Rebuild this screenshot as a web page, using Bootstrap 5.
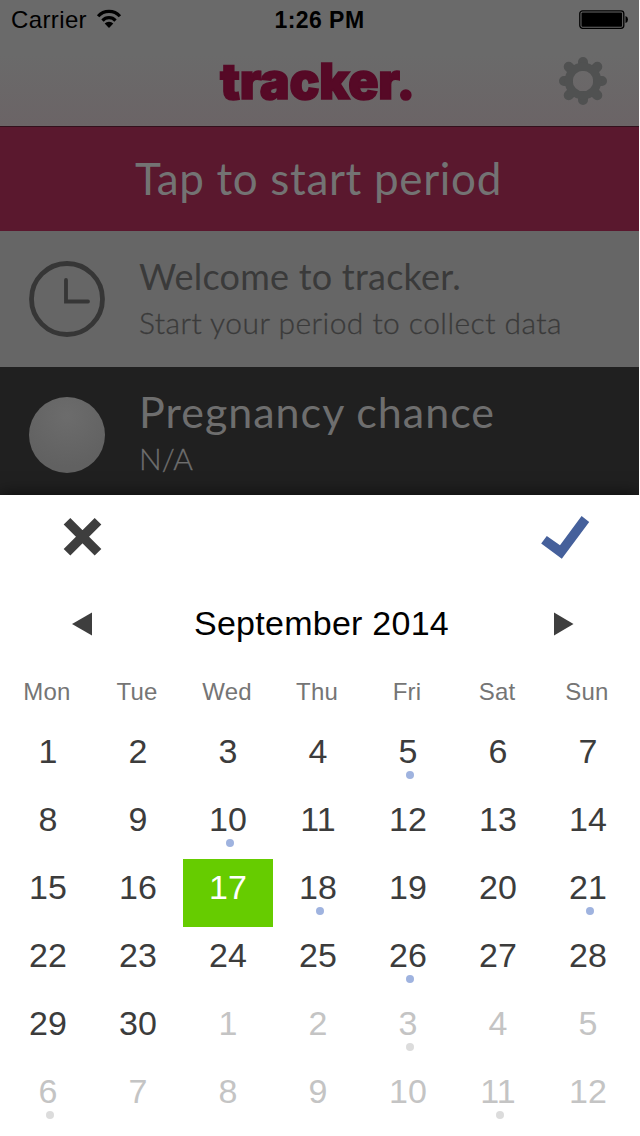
<!DOCTYPE html>
<html lang="en">
<head>
<meta charset="utf-8">
<meta name="viewport" content="width=device-width, initial-scale=1">
<title>tracker.</title>
<link href="https://cdn.jsdelivr.net/npm/bootstrap@5.3.0/dist/css/bootstrap.min.css" rel="stylesheet">
<style>
body{font-family:"Liberation Sans",Arial,sans-serif;background:#fff;overflow:hidden}
.phone{width:639px;height:1136px;overflow:hidden}
.top-area{height:127px;background:linear-gradient(#6a6a6a 0,#6a6a6a 55px,#6b6466 126px);border-bottom:1px solid #32101c}
.status{height:40px;padding:0 10px 0 11px;font-size:24px;line-height:40px;color:#000}
.status .wifi{margin-top:-2px}
.status .time{font-size:23px;font-weight:700}
.brand-row{height:86px}
.brand-name{font:900 50px/60px Inter,sans-serif;color:#560926;padding:11px 0 0 220px;-webkit-text-stroke:1.6px #560926}
.gear{right:31px;top:16px}
.start-btn{height:104px;padding-left:135px;background:#5a182e;color:#737373;font:400 44px/103px Lato,sans-serif}
.info{padding-left:29px;font-family:Lato,sans-serif}
.info-welcome{height:136px;background:#666;color:#3a3a3a}
.info-chance{height:128px;padding-top:30px;background:#202020;color:#6e6e6e}
.info-text{padding-left:34px;white-space:nowrap}
.info-welcome .info-text{margin-top:-1px}
.info-chance .info-text{margin-top:-10px}
.l1{font-size:36px;line-height:46px}
.l2{font-size:30px;line-height:46px;font-weight:300;-webkit-text-stroke:.3px #3a3a3a}
.l3{font-size:43px;line-height:50px}
.l4{font-size:30px;line-height:42px;font-weight:300;-webkit-text-stroke:.3px #6e6e6e}
.orb{width:76px;height:76px;background:radial-gradient(circle at 50% 25%,#6c6c6c,#616161 75%)}
.sheet{height:641px;background:#fff;box-shadow:0 0 16px 0 rgba(0,0,0,.7)}
.tools{height:86px;padding:21px 49px 0 62px}
.monthbar{height:97px;padding:22px 65px 0 72px}
.monthbar svg{margin-top:9px}
.month{font-size:34px;line-height:40px;color:#000;margin-left:-3px}
.grid7{display:grid;grid-template-columns:repeat(7,90px);padding-left:3px}
.weekdays{height:45px;padding-left:2px}
.weekday{font-size:24px;line-height:28px;color:#757575;letter-spacing:.2px}
.day{height:68px;font-size:34px;line-height:40px;padding-top:8px;color:#3c3c3c}
.day.out{color:#c4c4c4}
.day.today{background:#6c0;color:#fff}
.dot{width:8px;height:8px;left:43px;top:48px;background:#9fb3df}
.out .dot{background:#dcdcdc}
</style>
</head>
<body>
<main class="phone d-flex flex-column">
  <header class="top-area flex-shrink-0">
    <div class="status d-flex align-items-center position-relative">
      <span id="carrier">Carrier</span>
      <svg class="wifi ms-2" width="28" height="20" viewBox="0 0 28 20"><g fill="none" stroke="#000" stroke-width="3.2"><path d="M3.1 7.3a14.5 14.5 0 0 1 21.8 0"/><path d="M7.5 11.6a8.7 8.7 0 0 1 13 0"/></g><path d="M9.7 14.6a5.7 5.7 0 0 1 8.6 0L14 19z"/></svg>
      <span class="time position-absolute start-0 end-0 text-center"><span id="time">1:26 PM</span></span>
      <svg class="ms-auto" width="50" height="20" viewBox="0 0 50 20"><rect x=".8" y=".8" width="44" height="17.6" rx="2.8" fill="none" stroke="#000" stroke-width="1.3"/><rect x="2.5" y="2.5" width="40.6" height="14.2" rx="1"/><path d="M46.5 6v7q2.5-.8 2.5-3.5T46.5 6z"/></svg>
    </div>
    <div class="brand-row position-relative">
      <div class="brand-name"><span id="brand">tracker.</span></div>
      <svg class="gear position-absolute" width="50" height="50" viewBox="-25 -25 50 50"><g stroke="#505151" stroke-width="10" stroke-linecap="round"><path d="M0-19V-15M0 15v4M-19 0H-15M15 0h4M-14.3-14.3l3 3M11.3 11.3l3 3M14.3-14.3l-3 3M-11.3 11.3l-3 3"/></g><circle r="14.3" fill="none" stroke="#505151" stroke-width="8"/></svg>
    </div>
  </header>
  <div class="start-btn flex-shrink-0"><span id="tap">Tap to start period</span></div>
  <section class="info info-welcome d-flex align-items-center flex-shrink-0">
    <svg width="76" height="76" viewBox="0 0 76 76" fill="none" stroke="#363636"><circle cx="38" cy="38" r="35.5" stroke-width="4.8"/><path d="M37 19v21.5h22" stroke-width="3.8" stroke-linecap="round"/></svg>
    <div class="info-text"><div class="l1"><span id="welcome">Welcome to tracker.</span></div><div class="l2"><span id="collect">Start your period to collect data</span></div></div>
  </section>
  <section class="info info-chance d-flex flex-shrink-0">
    <div class="orb rounded-circle"></div>
    <div class="info-text"><div class="l3"><span id="chance">Pregnancy chance</span></div><div class="l4"><span id="na">N/A</span></div></div>
  </section>
  <section class="sheet position-relative flex-shrink-0">
    <div class="tools d-flex justify-content-between">
      <svg width="40" height="42" viewBox="0 0 40 42"><path d="M5 5.2l31 31M36 5.2l-31 31" stroke="#3e3e3e" stroke-width="9.4"/></svg>
      <svg width="50" height="44" viewBox="0 0 50 44"><path d="M1.2 27.4L6.8 20 20 29.3 41.6 0l7.6 6L21.8 42.7z" fill="#45609b"/></svg>
    </div>
    <div class="monthbar d-flex justify-content-between align-items-start">
      <svg width="21" height="24" viewBox="0 0 21 24"><path d="M0 12L20 .5v23z" fill="#3e3e3e"/></svg>
      <div class="month"><span id="month">September 2014</span></div>
      <svg width="21" height="24" viewBox="0 0 21 24"><path d="M20.5 12L1 .5v23z" fill="#3e3e3e"/></svg>
    </div>
    <div class="grid7 weekdays text-center" id="weekdays"></div>
    <div class="grid7 text-center" id="days"></div>
  </section>
</main>
<script src="https://cdn.jsdelivr.net/npm/bootstrap@5.3.0/dist/js/bootstrap.bundle.min.js"></script>
<script>
// Calendar: September 2014 starts on a Monday; trailing cells belong to October.
weekdays.innerHTML = ['Mon','Tue','Wed','Thu','Fri','Sat','Sun'].map(d => `<div class="weekday">${d}</div>`).join('');
const marked = [5, 10, 18, 21, 26, 33, 36, 41];
days.innerHTML = Array.from({length: 42}, (_, i) => {
  const n = i + 1;
  return `<div class="day position-relative${n > 30 ? ' out' : ''}${n === 17 ? ' today' : ''}">${n > 30 ? n - 30 : n}${marked.includes(n) ? '<i class="dot position-absolute rounded-circle"></i>' : ''}</div>`;
}).join('');
const widths = {carrier: 76, time: 90, brand: 195, tap: 367, welcome: 322, collect: 423, chance: 356, na: 54, month: 255};
for (const [id, w] of Object.entries(widths)) {
  const el = document.getElementById(id);
  el.style.letterSpacing = '0px';
  el.style.letterSpacing = (w - el.getBoundingClientRect().width) / el.textContent.length + 'px';
}
</script>
</body>
</html>
